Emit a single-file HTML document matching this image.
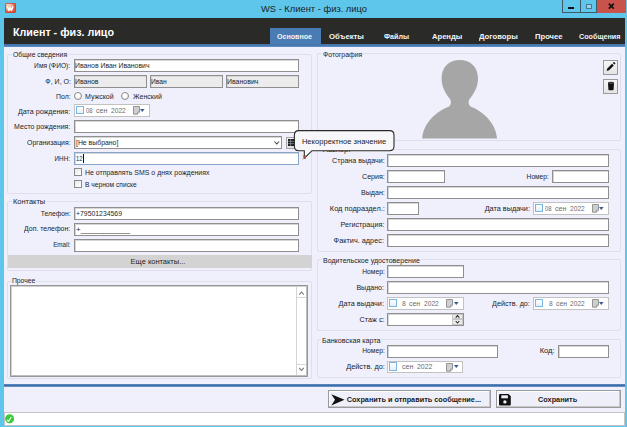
<!DOCTYPE html><html><head><meta charset="utf-8"><style>html,body{margin:0;padding:0;width:627px;height:427px;overflow:hidden;position:relative;font-family:"Liberation Sans",sans-serif}</style></head><body><div style="position:absolute;left:0px;top:0px;width:627px;height:427px;background:#5ec6ea"></div>
<div style="position:absolute;left:5.4px;top:3px;width:10.2px;height:10.3px;border-radius:2px;background:radial-gradient(circle at 30% 25%,#f3d9c4 0,#eab79a 30%,#e0563c 62%,#d9432f 100%);box-shadow:inset 0 0 0 0.8px #c2412e"></div>
<svg style="position:absolute;left:5.4px;top:3px" width="11" height="11"><path d="M2.4 3.4 L3.9 7.5 L5.2 4.6 L6.5 7.5 L8 3.4" fill="none" stroke="#fff" stroke-width="1.4" stroke-linejoin="round"/></svg>
<div id="t0" style="position:absolute;left:314.00px;top:4.39px;font-size:9.4px;line-height:10.500px;font-weight:400;color:#1d1d1d;white-space:nowrap;transform-origin:center center;transform:translateX(-50%) scaleX(0.9975);">WS - Клиент - физ. лицо</div>
<div style="position:absolute;left:580px;top:0px;width:17px;height:12.5px;background:#5ec6ea;border:1px solid #3d5a66;border-top:none;border-left:none;box-sizing:border-box"></div>
<div style="position:absolute;left:562px;top:0px;width:19px;height:12.5px;border:1px solid #3d5a66;border-top:none;box-sizing:border-box"></div>
<div style="position:absolute;left:597px;top:0px;width:28.5px;height:12.5px;background:#c9534b;box-sizing:border-box"></div>
<div style="position:absolute;left:568px;top:7px;width:6px;height:2px;background:#111"></div>
<div style="position:absolute;left:585.5px;top:3.5px;width:6.5px;height:5.0px;border:1px solid #4f7590;border-top-width:1.5px;background:#9ad4ec;box-sizing:border-box"></div>
<svg style="position:absolute;left:0;top:0" width="627" height="20"><path d="M608.8 3.6 L613.8 8.6 M613.8 3.6 L608.8 8.6" stroke="#111" stroke-width="1.6"/></svg>
<div style="position:absolute;left:4px;top:18.2px;width:621px;height:25.8px;background:#2a2a29"></div>
<div id="t1" style="position:absolute;left:13.00px;top:27.02px;font-size:10.7px;line-height:11.952px;font-weight:700;color:#ffffff;white-space:nowrap;transform-origin:left center;transform:scaleX(1.0034);">Клиент - физ. лицо</div>
<div style="position:absolute;left:270px;top:27.5px;width:51px;height:17.0px;background:#4a7cb4"></div>
<div id="t2" style="position:absolute;left:277.20px;top:32.69px;font-size:7.3px;line-height:8.154px;font-weight:700;color:#f4f4f4;white-space:nowrap;transform-origin:left center;transform:scaleX(0.9718);">Основное</div>
<div id="t3" style="position:absolute;left:328.50px;top:32.69px;font-size:7.3px;line-height:8.154px;font-weight:700;color:#f4f4f4;white-space:nowrap;transform-origin:left center;transform:scaleX(1.0631);">Объекты</div>
<div id="t4" style="position:absolute;left:384.10px;top:32.69px;font-size:7.3px;line-height:8.154px;font-weight:700;color:#f4f4f4;white-space:nowrap;transform-origin:left center;transform:scaleX(0.9750);">Файлы</div>
<div id="t5" style="position:absolute;left:432.00px;top:32.69px;font-size:7.3px;line-height:8.154px;font-weight:700;color:#f4f4f4;white-space:nowrap;transform-origin:left center;transform:scaleX(1.0426);">Аренды</div>
<div id="t6" style="position:absolute;left:478.80px;top:32.69px;font-size:7.3px;line-height:8.154px;font-weight:700;color:#f4f4f4;white-space:nowrap;transform-origin:left center;transform:scaleX(1.0576);">Договоры</div>
<div id="t7" style="position:absolute;left:534.70px;top:32.69px;font-size:7.3px;line-height:8.154px;font-weight:700;color:#f4f4f4;white-space:nowrap;transform-origin:left center;transform:scaleX(1.0439);">Прочее</div>
<div id="t8" style="position:absolute;left:579.00px;top:32.69px;font-size:7.3px;line-height:8.154px;font-weight:700;color:#f4f4f4;white-space:nowrap;transform-origin:left center;transform:scaleX(0.9842);">Сообщения</div>
<div style="position:absolute;left:4px;top:43.8px;width:621px;height:3.2px;background:linear-gradient(#4777b0 0%,#4576ae 55%,#6c9ccf 100%)"></div>
<div style="position:absolute;left:4px;top:47px;width:621px;height:336.5px;background:#f0f0fc"></div>
<div style="position:absolute;left:7px;top:53.5px;width:304.5px;height:140.0px;border:1px solid #dedeec;border-radius:2px;box-sizing:border-box"></div>
<div id="t9" style="position:absolute;left:12.80px;top:50.60px;font-size:7.4px;line-height:8.266px;font-weight:400;color:#222;white-space:nowrap;transform-origin:left center;transform:scaleX(0.9267);background:#f0f0fc;padding:0 1px;margin-left:-1px">Общие сведения</div>
<div style="position:absolute;left:7px;top:201px;width:304.5px;height:70px;border:1px solid #dedeec;border-radius:2px;box-sizing:border-box"></div>
<div id="t10" style="position:absolute;left:12.70px;top:198.10px;font-size:7.4px;line-height:8.266px;font-weight:400;color:#222;white-space:nowrap;transform-origin:left center;transform:scaleX(1.0082);background:#f0f0fc;padding:0 1px;margin-left:-1px">Контакты</div>
<div style="position:absolute;left:7px;top:280.5px;width:304.5px;height:98.3px;border:1px solid #dedeec;border-radius:2px;box-sizing:border-box"></div>
<div id="t11" style="position:absolute;left:12.40px;top:276.50px;font-size:7.4px;line-height:8.266px;font-weight:400;color:#222;white-space:nowrap;transform-origin:left center;transform:scaleX(0.9233);background:#f0f0fc;padding:0 1px;margin-left:-1px">Прочее</div>
<div style="position:absolute;left:317.3px;top:53px;width:304.2px;height:87.8px;border:1px solid #dedeec;border-radius:2px;box-sizing:border-box"></div>
<div id="t12" style="position:absolute;left:323.20px;top:50.50px;font-size:7.4px;line-height:8.266px;font-weight:400;color:#222;white-space:nowrap;transform-origin:left center;transform:scaleX(0.9357);background:#f0f0fc;padding:0 1px;margin-left:-1px">Фотография</div>
<div style="position:absolute;left:317.3px;top:149px;width:304.2px;height:102.6px;border:1px solid #dedeec;border-radius:2px;box-sizing:border-box"></div>
<div id="t13" style="position:absolute;left:322.70px;top:146.10px;font-size:7.4px;line-height:8.266px;font-weight:400;color:#222;white-space:nowrap;transform-origin:left center;background:#f0f0fc;padding:0 1px;margin-left:-1px">Паспорт</div>
<div style="position:absolute;left:317.3px;top:259.2px;width:304.2px;height:71.6px;border:1px solid #dedeec;border-radius:2px;box-sizing:border-box"></div>
<div id="t14" style="position:absolute;left:322.80px;top:256.90px;font-size:7.4px;line-height:8.266px;font-weight:400;color:#222;white-space:nowrap;transform-origin:left center;transform:scaleX(0.9554);background:#f0f0fc;padding:0 1px;margin-left:-1px">Водительское удостоверение</div>
<div style="position:absolute;left:317.3px;top:339.2px;width:304.2px;height:39.2px;border:1px solid #dedeec;border-radius:2px;box-sizing:border-box"></div>
<div id="t15" style="position:absolute;left:322.30px;top:336.80px;font-size:7.4px;line-height:8.266px;font-weight:400;color:#222;white-space:nowrap;transform-origin:left center;transform:scaleX(0.9696);background:#f0f0fc;padding:0 1px;margin-left:-1px">Банковская карта</div>
<div id="t16" style="position:absolute;right:556.50px;top:61.90px;font-size:7.4px;line-height:8.266px;font-weight:400;color:#222;white-space:nowrap;transform-origin:right center;transform:scaleX(0.8975);">Имя (ФИО):</div>
<div style="position:absolute;left:74px;top:59px;width:225px;height:13px;background:#fff;border:1px solid #8f8f8f;box-shadow:inset 1px 1px 0 #d6d6d6;box-sizing:border-box"></div>
<div id="t17" style="position:absolute;left:75.10px;top:61.90px;font-size:7.4px;line-height:8.266px;font-weight:400;color:#1e1e1e;white-space:nowrap;transform-origin:left center;transform:scaleX(0.9289);">Иванов Иван Иванович</div>
<div id="t18" style="position:absolute;right:556.50px;top:78.30px;font-size:7.4px;line-height:8.266px;font-weight:400;color:#222;white-space:nowrap;transform-origin:right center;transform:scaleX(0.9498);">Ф, И, О:</div>
<div style="position:absolute;left:74px;top:75px;width:73px;height:13px;background:#ececec;border:1px solid #8f8f8f;box-shadow:inset 1px 1px 0 #d6d6d6;box-sizing:border-box"></div>
<div style="position:absolute;left:150px;top:75px;width:73px;height:13px;background:#ececec;border:1px solid #8f8f8f;box-shadow:inset 1px 1px 0 #d6d6d6;box-sizing:border-box"></div>
<div style="position:absolute;left:226px;top:75px;width:73px;height:13px;background:#ececec;border:1px solid #8f8f8f;box-shadow:inset 1px 1px 0 #d6d6d6;box-sizing:border-box"></div>
<div id="t19" style="position:absolute;left:75.10px;top:78.30px;font-size:7.4px;line-height:8.266px;font-weight:400;color:#1e1e1e;white-space:nowrap;transform-origin:left center;transform:scaleX(0.9255);">Иванов</div>
<div id="t20" style="position:absolute;left:151.10px;top:78.30px;font-size:7.4px;line-height:8.266px;font-weight:400;color:#1e1e1e;white-space:nowrap;transform-origin:left center;transform:scaleX(0.9102);">Иван</div>
<div id="t21" style="position:absolute;left:227.00px;top:78.30px;font-size:7.4px;line-height:8.266px;font-weight:400;color:#1e1e1e;white-space:nowrap;transform-origin:left center;transform:scaleX(0.9408);">Иванович</div>
<div id="t22" style="position:absolute;right:556.50px;top:92.80px;font-size:7.4px;line-height:8.266px;font-weight:400;color:#222;white-space:nowrap;transform-origin:right center;transform:scaleX(0.9335);">Пол:</div>
<div style="position:absolute;left:73.6px;top:91.6px;width:8.0px;height:8.0px;border:1px solid #8a8a8a;border-radius:50%;background:radial-gradient(circle at 40% 35%,#fff 30%,#e4e4e4);box-sizing:border-box"></div>
<div id="t23" style="position:absolute;left:85.20px;top:92.80px;font-size:7.4px;line-height:8.266px;font-weight:400;color:#1e1e1e;white-space:nowrap;transform-origin:left center;transform:scaleX(0.9497);">Мужской</div>
<div style="position:absolute;left:120.9px;top:91.6px;width:8.0px;height:8.0px;border:1px solid #8a8a8a;border-radius:50%;background:radial-gradient(circle at 40% 35%,#fff 30%,#e4e4e4);box-sizing:border-box"></div>
<div id="t24" style="position:absolute;left:132.60px;top:92.80px;font-size:7.4px;line-height:8.266px;font-weight:400;color:#1e1e1e;white-space:nowrap;transform-origin:left center;transform:scaleX(0.9593);">Женский</div>
<div id="t25" style="position:absolute;right:556.50px;top:107.50px;font-size:7.4px;line-height:8.266px;font-weight:400;color:#222;white-space:nowrap;transform-origin:right center;transform:scaleX(0.9649);">Дата рождения:</div>
<div style="position:absolute;left:74px;top:104px;width:76px;height:13px;background:#fff;border:1px solid #c2c2c2;box-sizing:border-box"></div>
<div style="position:absolute;left:75.8px;top:105.6px;width:8.2px;height:8.6px;border:1px solid #78b6e4;background:linear-gradient(#fff,#e6eef6);box-sizing:border-box"></div>
<div id="t26" style="position:absolute;left:85.80px;top:106.70px;font-size:7.4px;line-height:8.266px;font-weight:400;color:#6c6c6c;white-space:nowrap;transform-origin:left center;transform:scaleX(0.8015);">08</div>
<div id="t27" style="position:absolute;left:95.60px;top:106.70px;font-size:7.4px;line-height:8.266px;font-weight:400;color:#6c6c6c;white-space:nowrap;transform-origin:left center;transform:scaleX(0.9671);">сен</div>
<div id="t28" style="position:absolute;left:110.90px;top:106.70px;font-size:7.4px;line-height:8.266px;font-weight:400;color:#6c6c6c;white-space:nowrap;transform-origin:left center;transform:scaleX(0.8995);">2022</div>
<svg style="position:absolute;left:132.6px;top:106.4px" width="8" height="9"><path d="M0.5 0.5 H6.5 V6 L4.5 8.2 H0.5 Z" fill="#cfcfcf" stroke="#8a8a8a" stroke-width="0.9"/><path d="M6.5 6 H4.5 V8.2" fill="#eee" stroke="#8a8a8a" stroke-width="0.7"/></svg>
<svg style="position:absolute;left:140.4px;top:108.6px" width="5" height="4"><path d="M0 0 L4.6 0 L2.3 3 Z" fill="#3a5c92"/></svg>
<div id="t29" style="position:absolute;right:556.50px;top:123.00px;font-size:7.4px;line-height:8.266px;font-weight:400;color:#222;white-space:nowrap;transform-origin:right center;transform:scaleX(0.9480);">Место рождения:</div>
<div style="position:absolute;left:74px;top:120px;width:225px;height:13px;background:#fff;border:1px solid #8f8f8f;box-shadow:inset 1px 1px 0 #d6d6d6;box-sizing:border-box"></div>
<div id="t30" style="position:absolute;right:556.50px;top:138.60px;font-size:7.4px;line-height:8.266px;font-weight:400;color:#222;white-space:nowrap;transform-origin:right center;transform:scaleX(0.9348);">Организация:</div>
<div style="position:absolute;left:74px;top:136px;width:208px;height:13px;background:#fff;border:1px solid #8f8f8f;box-shadow:inset 1px 1px 0 #d6d6d6;box-sizing:border-box"></div>
<div id="t31" style="position:absolute;left:75.50px;top:139.00px;font-size:7.4px;line-height:8.266px;font-weight:400;color:#1e1e1e;white-space:nowrap;transform-origin:left center;transform:scaleX(0.9297);">[Не выбрано]</div>
<svg style="position:absolute;left:273.8px;top:141px" width="6" height="4"><path d="M0.5 0.5 L2.8 3 L5.1 0.5" fill="none" stroke="#444" stroke-width="1.1"/></svg>
<div style="position:absolute;left:286px;top:136.5px;width:11px;height:12.0px;background:linear-gradient(#f2f2f2,#e2e2e2);border:1px solid #a4a4a4;box-sizing:border-box"></div>
<svg style="position:absolute;left:288px;top:139px" width="8" height="7"><rect x="0" y="0" width="8" height="7" fill="#1a1a1a"/><path d="M0 2.35 H8 M0 4.65 H8 M2.6 0 V7" stroke="#9aa0a8" stroke-width="0.7"/></svg>
<div id="t32" style="position:absolute;right:556.50px;top:154.70px;font-size:7.4px;line-height:8.266px;font-weight:400;color:#222;white-space:nowrap;transform-origin:right center;transform:scaleX(0.8589);">ИНН:</div>
<div style="position:absolute;left:74px;top:152px;width:225px;height:13px;background:#fff;border:1px solid #88a6cc;box-shadow:inset 1px 1px 0 #d6d6d6;box-sizing:border-box"></div>
<div id="t33" style="position:absolute;left:76.30px;top:155.00px;font-size:7.4px;line-height:8.266px;font-weight:400;color:#1e1e1e;white-space:nowrap;transform-origin:left center;transform:scaleX(0.7772);">12</div>
<div style="position:absolute;left:83.2px;top:154.2px;width:0.8px;height:8.6px;background:#111"></div>
<div style="position:absolute;left:73.9px;top:168.3px;width:8.1px;height:8.2px;border:1px solid #8a8a8a;background:linear-gradient(135deg,#e8e8e8,#fff);box-sizing:border-box"></div>
<div id="t34" style="position:absolute;left:85.30px;top:168.70px;font-size:7.4px;line-height:8.266px;font-weight:400;color:#1e1e1e;white-space:nowrap;transform-origin:left center;transform:scaleX(0.9416);">Не отправлять SMS о днях рождениях</div>
<div style="position:absolute;left:73.9px;top:180.2px;width:8.1px;height:8.1px;border:1px solid #8a8a8a;background:linear-gradient(135deg,#e8e8e8,#fff);box-sizing:border-box"></div>
<div id="t35" style="position:absolute;left:85.30px;top:180.70px;font-size:7.4px;line-height:8.266px;font-weight:400;color:#1e1e1e;white-space:nowrap;transform-origin:left center;transform:scaleX(0.9018);">В черном списке</div>
<div id="t36" style="position:absolute;right:556.50px;top:209.60px;font-size:7.4px;line-height:8.266px;font-weight:400;color:#222;white-space:nowrap;transform-origin:right center;transform:scaleX(0.9138);">Телефон:</div>
<div style="position:absolute;left:74px;top:207px;width:225px;height:13px;background:#fff;border:1px solid #8f8f8f;box-shadow:inset 1px 1px 0 #d6d6d6;box-sizing:border-box"></div>
<div id="t37" style="position:absolute;left:75.80px;top:210.00px;font-size:7.4px;line-height:8.266px;font-weight:400;color:#1e1e1e;white-space:nowrap;transform-origin:left center;transform:scaleX(0.9287);">+79501234569</div>
<div id="t38" style="position:absolute;right:556.50px;top:225.00px;font-size:7.4px;line-height:8.266px;font-weight:400;color:#222;white-space:nowrap;transform-origin:right center;transform:scaleX(0.9384);">Доп. телефон:</div>
<div style="position:absolute;left:74px;top:223px;width:225px;height:13px;background:#fff;border:1px solid #8f8f8f;box-shadow:inset 1px 1px 0 #d6d6d6;box-sizing:border-box"></div>
<div id="t39" style="position:absolute;left:75.80px;top:225.80px;font-size:7.4px;line-height:8.266px;font-weight:400;color:#1e1e1e;white-space:nowrap;transform-origin:left center;transform:scaleX(1.0902);">+___________</div>
<div id="t40" style="position:absolute;right:556.50px;top:240.80px;font-size:7.4px;line-height:8.266px;font-weight:400;color:#222;white-space:nowrap;transform-origin:right center;transform:scaleX(0.8468);">Email:</div>
<div style="position:absolute;left:74px;top:239px;width:225px;height:13px;background:#fff;border:1px solid #8f8f8f;box-shadow:inset 1px 1px 0 #d6d6d6;box-sizing:border-box"></div>
<div style="position:absolute;left:8px;top:255px;width:303.5px;height:13.3px;background:#d3d3d3"></div>
<div id="t41" style="position:absolute;left:157.90px;top:258.20px;font-size:7.4px;line-height:8.266px;font-weight:400;color:#1e1e1e;white-space:nowrap;transform-origin:center center;transform:translateX(-50%) scaleX(1.0113);">Еще контакты...</div>
<div style="position:absolute;left:10px;top:285.3px;width:298.2px;height:91.7px;background:#fff;border:1px solid #979797;box-shadow:inset 1px 1px 0 #cfcfcf, inset -1px -1px 0 #bdbdbd;box-sizing:border-box"></div>
<div style="position:absolute;left:296.4px;top:287.3px;width:9.8px;height:87.7px;background:#fff;border-left:1px solid #d4d4d4;box-sizing:border-box"></div>
<div style="position:absolute;left:296.4px;top:297px;width:9.8px;height:1px;background:#d8d8d8"></div>
<div style="position:absolute;left:296.4px;top:364.2px;width:9.8px;height:1.0px;background:#d8d8d8"></div>
<svg style="position:absolute;left:0;top:0" width="627" height="427"><path d="M299.2 294.6 L301.5 292 L303.8 294.6 M299.2 367.8 L301.5 370.4 L303.8 367.8" fill="none" stroke="#7a7a7a" stroke-width="1.1"/></svg>
<svg style="position:absolute;left:0;top:0" width="627" height="427"><g fill="#a6a6a6"><path d="M459.8 59.9 C470.5 59.9 478 67 478 78.2 C478 86 475 92 470 98.5 C468.3 100.5 468 104 470.5 106.5 C482.5 110.8 496 123 497.1 138.5 L422.2 138.5 C423.3 123 436.8 110.8 449.1 106.5 C451.6 104 451.3 100.5 449.6 98.5 C444.6 92 441.6 86 441.6 78.2 C441.6 67 449 59.9 459.8 59.9 Z"/></g></svg>
<div style="position:absolute;left:603.2px;top:60.2px;width:14.8px;height:14.4px;background:linear-gradient(#f6f6f6,#e4e4e4);border:1px solid #9a9a9a;box-sizing:border-box"></div>
<svg style="position:absolute;left:605px;top:62px" width="11" height="11"><path d="M1.6 8.9 L2.3 6.4 L7 1.7 L8.8 3.5 L4.1 8.2 Z" fill="#111"/><path d="M7.8 0.9 L8.5 0.2 Q9 0 9.4 0.3 L10.2 1.1 Q10.5 1.5 10.2 1.9 L9.5 2.6 Z" fill="#111"/></svg>
<div style="position:absolute;left:603.2px;top:79.1px;width:14.8px;height:14.5px;background:linear-gradient(#f6f6f6,#e4e4e4);border:1px solid #9a9a9a;box-sizing:border-box"></div>
<svg style="position:absolute;left:605px;top:81px" width="11" height="11"><path d="M3 2 Q3 0.8 6 0.8 Q9 0.8 9 2 L8.6 8.6 Q8.5 9.3 7.8 9.3 L4.2 9.3 Q3.5 9.3 3.4 8.6 Z" fill="#111"/><ellipse cx="6" cy="2" rx="2.3" ry="0.55" fill="#777"/></svg>
<div id="t42" style="position:absolute;right:242.60px;top:156.80px;font-size:7.4px;line-height:8.266px;font-weight:400;color:#222;white-space:nowrap;transform-origin:right center;transform:scaleX(0.9631);">Страна выдачи:</div>
<div style="position:absolute;left:387px;top:154px;width:222px;height:13px;background:#fff;border:1px solid #8f8f8f;box-shadow:inset 1px 1px 0 #d6d6d6;box-sizing:border-box"></div>
<div id="t43" style="position:absolute;right:242.60px;top:172.80px;font-size:7.4px;line-height:8.266px;font-weight:400;color:#222;white-space:nowrap;transform-origin:right center;transform:scaleX(0.9558);">Серия:</div>
<div style="position:absolute;left:387px;top:170px;width:58px;height:13px;background:#fff;border:1px solid #8f8f8f;box-shadow:inset 1px 1px 0 #d6d6d6;box-sizing:border-box"></div>
<div id="t44" style="position:absolute;right:78.00px;top:172.80px;font-size:7.4px;line-height:8.266px;font-weight:400;color:#222;white-space:nowrap;transform-origin:right center;transform:scaleX(0.8947);">Номер:</div>
<div style="position:absolute;left:552px;top:170px;width:57px;height:13px;background:#fff;border:1px solid #8f8f8f;box-shadow:inset 1px 1px 0 #d6d6d6;box-sizing:border-box"></div>
<div id="t45" style="position:absolute;right:242.60px;top:188.80px;font-size:7.4px;line-height:8.266px;font-weight:400;color:#222;white-space:nowrap;transform-origin:right center;transform:scaleX(0.9632);">Выдан:</div>
<div style="position:absolute;left:387px;top:186px;width:222px;height:13px;background:#fff;border:1px solid #8f8f8f;box-shadow:inset 1px 1px 0 #d6d6d6;box-sizing:border-box"></div>
<div id="t46" style="position:absolute;right:242.60px;top:204.80px;font-size:7.4px;line-height:8.266px;font-weight:400;color:#222;white-space:nowrap;transform-origin:right center;transform:scaleX(1.0028);">Код подраздел.:</div>
<div style="position:absolute;left:387px;top:202px;width:32px;height:13px;background:#fff;border:1px solid #8f8f8f;box-shadow:inset 1px 1px 0 #d6d6d6;box-sizing:border-box"></div>
<div id="t47" style="position:absolute;right:97.20px;top:204.80px;font-size:7.4px;line-height:8.266px;font-weight:400;color:#222;white-space:nowrap;transform-origin:right center;transform:scaleX(0.9858);">Дата выдачи:</div>
<div style="position:absolute;left:533.3px;top:202px;width:75.7px;height:12.6px;background:#fff;border:1px solid #c2c2c2;box-sizing:border-box"></div>
<div style="position:absolute;left:535.0999999999999px;top:203.6px;width:8.2px;height:8.6px;border:1px solid #78b6e4;background:linear-gradient(#fff,#e6eef6);box-sizing:border-box"></div>
<div id="t48" style="position:absolute;left:545.10px;top:204.70px;font-size:7.4px;line-height:8.266px;font-weight:400;color:#6c6c6c;white-space:nowrap;transform-origin:left center;transform:scaleX(0.8015);">08</div>
<div id="t49" style="position:absolute;left:554.90px;top:204.70px;font-size:7.4px;line-height:8.266px;font-weight:400;color:#6c6c6c;white-space:nowrap;transform-origin:left center;transform:scaleX(0.9671);">сен</div>
<div id="t50" style="position:absolute;left:570.20px;top:204.70px;font-size:7.4px;line-height:8.266px;font-weight:400;color:#6c6c6c;white-space:nowrap;transform-origin:left center;transform:scaleX(0.8995);">2022</div>
<svg style="position:absolute;left:591.6px;top:204.4px" width="8" height="9"><path d="M0.5 0.5 H6.5 V6 L4.5 8.2 H0.5 Z" fill="#cfcfcf" stroke="#8a8a8a" stroke-width="0.9"/><path d="M6.5 6 H4.5 V8.2" fill="#eee" stroke="#8a8a8a" stroke-width="0.7"/></svg>
<svg style="position:absolute;left:599.4px;top:206.6px" width="5" height="4"><path d="M0 0 L4.6 0 L2.3 3 Z" fill="#3a5c92"/></svg>
<div id="t51" style="position:absolute;right:242.60px;top:220.80px;font-size:7.4px;line-height:8.266px;font-weight:400;color:#222;white-space:nowrap;transform-origin:right center;transform:scaleX(0.9676);">Регистрация:</div>
<div style="position:absolute;left:387px;top:218px;width:222px;height:13px;background:#fff;border:1px solid #8f8f8f;box-shadow:inset 1px 1px 0 #d6d6d6;box-sizing:border-box"></div>
<div id="t52" style="position:absolute;right:242.60px;top:236.80px;font-size:7.4px;line-height:8.266px;font-weight:400;color:#222;white-space:nowrap;transform-origin:right center;transform:scaleX(0.9878);">Фактич. адрес:</div>
<div style="position:absolute;left:387px;top:234px;width:222px;height:13px;background:#fff;border:1px solid #8f8f8f;box-shadow:inset 1px 1px 0 #d6d6d6;box-sizing:border-box"></div>
<div id="t53" style="position:absolute;right:242.60px;top:267.80px;font-size:7.4px;line-height:8.266px;font-weight:400;color:#222;white-space:nowrap;transform-origin:right center;transform:scaleX(0.9108);">Номер:</div>
<div style="position:absolute;left:387px;top:265px;width:76.5px;height:13px;background:#fff;border:1px solid #8f8f8f;box-shadow:inset 1px 1px 0 #d6d6d6;box-sizing:border-box"></div>
<div id="t54" style="position:absolute;right:242.60px;top:283.80px;font-size:7.4px;line-height:8.266px;font-weight:400;color:#222;white-space:nowrap;transform-origin:right center;transform:scaleX(0.9508);">Выдано:</div>
<div style="position:absolute;left:387px;top:281px;width:222px;height:13px;background:#fff;border:1px solid #8f8f8f;box-shadow:inset 1px 1px 0 #d6d6d6;box-sizing:border-box"></div>
<div id="t55" style="position:absolute;right:242.60px;top:299.80px;font-size:7.4px;line-height:8.266px;font-weight:400;color:#222;white-space:nowrap;transform-origin:right center;transform:scaleX(0.9880);">Дата выдачи:</div>
<div style="position:absolute;left:387px;top:297px;width:76.5px;height:12.6px;background:#fff;border:1px solid #c2c2c2;box-sizing:border-box"></div>
<div style="position:absolute;left:388.8px;top:298.6px;width:8.2px;height:8.6px;border:1px solid #78b6e4;background:linear-gradient(#fff,#e6eef6);box-sizing:border-box"></div>
<div id="t56" style="position:absolute;left:402.40px;top:299.70px;font-size:7.4px;line-height:8.266px;font-weight:400;color:#6c6c6c;white-space:nowrap;transform-origin:left center;transform:scaleX(0.8970);">8</div>
<div id="t57" style="position:absolute;left:409.30px;top:299.70px;font-size:7.4px;line-height:8.266px;font-weight:400;color:#6c6c6c;white-space:nowrap;transform-origin:left center;transform:scaleX(0.9419);">сен</div>
<div id="t58" style="position:absolute;left:424.10px;top:299.70px;font-size:7.4px;line-height:8.266px;font-weight:400;color:#6c6c6c;white-space:nowrap;transform-origin:left center;transform:scaleX(0.8995);">2022</div>
<svg style="position:absolute;left:446.1px;top:299.4px" width="8" height="9"><path d="M0.5 0.5 H6.5 V6 L4.5 8.2 H0.5 Z" fill="#cfcfcf" stroke="#8a8a8a" stroke-width="0.9"/><path d="M6.5 6 H4.5 V8.2" fill="#eee" stroke="#8a8a8a" stroke-width="0.7"/></svg>
<svg style="position:absolute;left:453.9px;top:301.6px" width="5" height="4"><path d="M0 0 L4.6 0 L2.3 3 Z" fill="#3a5c92"/></svg>
<div id="t59" style="position:absolute;right:97.20px;top:299.80px;font-size:7.4px;line-height:8.266px;font-weight:400;color:#222;white-space:nowrap;transform-origin:right center;transform:scaleX(0.9731);">Действ. до:</div>
<div style="position:absolute;left:533.3px;top:297px;width:75.7px;height:12.6px;background:#fff;border:1px solid #c2c2c2;box-sizing:border-box"></div>
<div style="position:absolute;left:535.0999999999999px;top:298.6px;width:8.2px;height:8.6px;border:1px solid #78b6e4;background:linear-gradient(#fff,#e6eef6);box-sizing:border-box"></div>
<div id="t60" style="position:absolute;left:548.70px;top:299.70px;font-size:7.4px;line-height:8.266px;font-weight:400;color:#6c6c6c;white-space:nowrap;transform-origin:left center;transform:scaleX(0.8970);">8</div>
<div id="t61" style="position:absolute;left:555.60px;top:299.70px;font-size:7.4px;line-height:8.266px;font-weight:400;color:#6c6c6c;white-space:nowrap;transform-origin:left center;transform:scaleX(0.9419);">сен</div>
<div id="t62" style="position:absolute;left:570.40px;top:299.70px;font-size:7.4px;line-height:8.266px;font-weight:400;color:#6c6c6c;white-space:nowrap;transform-origin:left center;transform:scaleX(0.8995);">2022</div>
<svg style="position:absolute;left:591.6px;top:299.4px" width="8" height="9"><path d="M0.5 0.5 H6.5 V6 L4.5 8.2 H0.5 Z" fill="#cfcfcf" stroke="#8a8a8a" stroke-width="0.9"/><path d="M6.5 6 H4.5 V8.2" fill="#eee" stroke="#8a8a8a" stroke-width="0.7"/></svg>
<svg style="position:absolute;left:599.4px;top:301.6px" width="5" height="4"><path d="M0 0 L4.6 0 L2.3 3 Z" fill="#3a5c92"/></svg>
<div id="t63" style="position:absolute;right:242.60px;top:315.80px;font-size:7.4px;line-height:8.266px;font-weight:400;color:#222;white-space:nowrap;transform-origin:right center;transform:scaleX(0.9765);">Стаж с:</div>
<div style="position:absolute;left:387px;top:313px;width:76.5px;height:13px;background:#fff;border:1px solid #8f8f8f;box-shadow:inset 1px 1px 0 #d6d6d6;box-sizing:border-box"></div>
<div style="position:absolute;left:452px;top:314px;width:10.5px;height:5.4px;background:#ececec;border:1px solid #c6c6c6;box-sizing:border-box"></div>
<div style="position:absolute;left:452px;top:319.4px;width:10.5px;height:5.6px;background:#ececec;border:1px solid #c6c6c6;box-sizing:border-box"></div>
<svg style="position:absolute;left:0;top:0" width="627" height="427"><path d="M455.7 317.6 L457.5 315.6 L459.3 317.6 M455.7 321 L457.5 323 L459.3 321" fill="none" stroke="#2a2a2a" stroke-width="1.1"/></svg>
<div id="t64" style="position:absolute;right:242.60px;top:347.30px;font-size:7.4px;line-height:8.266px;font-weight:400;color:#222;white-space:nowrap;transform-origin:right center;transform:scaleX(0.9108);">Номер:</div>
<div style="position:absolute;left:387px;top:345px;width:111px;height:12.5px;background:#fff;border:1px solid #8f8f8f;box-shadow:inset 1px 1px 0 #d6d6d6;box-sizing:border-box"></div>
<div id="t65" style="position:absolute;right:72.00px;top:347.30px;font-size:7.4px;line-height:8.266px;font-weight:400;color:#222;white-space:nowrap;transform-origin:right center;transform:scaleX(1.0256);">Код:</div>
<div style="position:absolute;left:557.7px;top:345px;width:51.6px;height:12.5px;background:#fff;border:1px solid #8f8f8f;box-shadow:inset 1px 1px 0 #d6d6d6;box-sizing:border-box"></div>
<div id="t66" style="position:absolute;right:242.60px;top:363.30px;font-size:7.4px;line-height:8.266px;font-weight:400;color:#222;white-space:nowrap;transform-origin:right center;transform:scaleX(0.9963);">Действ. до:</div>
<div style="position:absolute;left:387px;top:360.5px;width:76.3px;height:12.5px;background:#fff;border:1px solid #c2c2c2;box-sizing:border-box"></div>
<div style="position:absolute;left:388.8px;top:362.1px;width:8.2px;height:8.6px;border:1px solid #78b6e4;background:linear-gradient(#fff,#e6eef6);box-sizing:border-box"></div>
<div id="t67" style="position:absolute;left:402.00px;top:363.20px;font-size:7.4px;line-height:8.266px;font-weight:400;color:#6c6c6c;white-space:nowrap;transform-origin:left center;transform:scaleX(0.9671);">сен</div>
<div id="t68" style="position:absolute;left:416.80px;top:363.20px;font-size:7.4px;line-height:8.266px;font-weight:400;color:#6c6c6c;white-space:nowrap;transform-origin:left center;transform:scaleX(0.9360);">2022</div>
<svg style="position:absolute;left:445.90000000000003px;top:362.9px" width="8" height="9"><path d="M0.5 0.5 H6.5 V6 L4.5 8.2 H0.5 Z" fill="#cfcfcf" stroke="#8a8a8a" stroke-width="0.9"/><path d="M6.5 6 H4.5 V8.2" fill="#eee" stroke="#8a8a8a" stroke-width="0.7"/></svg>
<svg style="position:absolute;left:453.7px;top:365.1px" width="5" height="4"><path d="M0 0 L4.6 0 L2.3 3 Z" fill="#3a5c92"/></svg>
<div style="position:absolute;left:4px;top:383.5px;width:621px;height:3.7px;background:linear-gradient(#6894c8 0%,#3e6da7 35%,#4172ab 70%,#8ab0da 100%)"></div>
<div style="position:absolute;left:4px;top:387.2px;width:621px;height:25.3px;background:#f0f0fc"></div>
<div style="position:absolute;left:328px;top:390px;width:163px;height:18px;background:#efeffa;border:1px solid #9a9a9a;box-shadow:inset -1px -1px 0 #c8c8c8, inset 1px 1px 0 #fff;box-sizing:border-box"></div>
<svg style="position:absolute;left:330.5px;top:393.5px" width="14" height="12"><path d="M0.3 0.3 L13.5 5.8 L0.3 11.4 L4 5.8 Z" fill="#111"/></svg>
<div id="t69" style="position:absolute;left:346.80px;top:396.39px;font-size:7.3px;line-height:8.154px;font-weight:700;color:#1a1a1a;white-space:nowrap;transform-origin:left center;">Сохранить и отправить сообщение...</div>
<div style="position:absolute;left:495.8px;top:390px;width:125.2px;height:18px;background:#efeffa;border:1px solid #9a9a9a;box-shadow:inset -1px -1px 0 #c8c8c8, inset 1px 1px 0 #fff;box-sizing:border-box"></div>
<svg style="position:absolute;left:499.4px;top:394.2px" width="12" height="12"><path d="M0 1.2 Q0 0 1.2 0 L9.5 0 L11.8 2.3 L11.8 10.6 Q11.8 11.6 10.8 11.6 L1.2 11.6 Q0 11.6 0 10.6 Z" fill="#111"/><rect x="2.3" y="1.3" width="6.6" height="3" fill="#efeffa"/><circle cx="5.9" cy="7.9" r="1.7" fill="#efeffa"/></svg>
<div id="t70" style="position:absolute;left:538.00px;top:396.39px;font-size:7.3px;line-height:8.154px;font-weight:700;color:#1a1a1a;white-space:nowrap;transform-origin:left center;transform:scaleX(1.0031);">Сохранить</div>
<div style="position:absolute;left:4px;top:412px;width:621px;height:14px;background:#fff;border:1px solid #c4c4c4;box-sizing:border-box"></div>
<svg style="position:absolute;left:5.3px;top:414.2px" width="10" height="10"><circle cx="4.6" cy="4.7" r="4.5" fill="#3bc93b"/><path d="M1.9 6 L3.6 7.2 L6.3 3" fill="none" stroke="#fff" stroke-width="1.2"/></svg>
<svg style="position:absolute;left:0;top:0" width="627" height="427"><path d="M298.8 130.6 L389.6 130.6 Q394 130.6 394 135 L394 146.3 Q394 150.7 389.6 150.7 L312 150.7 L304.3 158.2 L304.3 150.7 L298.8 150.7 Q294.4 150.7 294.4 146.3 L294.4 135 Q294.4 130.6 298.8 130.6 Z" fill="#f7f7f9" stroke="#2a2a2a" stroke-width="1.1"/><path d="M302.6 155.6 L306 158.8 M306 155.6 L302.6 158.8" stroke="#e05a30" stroke-width="1"/></svg>
<div id="t71" style="position:absolute;left:301.90px;top:137.72px;font-size:7.6px;line-height:8.489px;font-weight:400;color:#222;white-space:nowrap;transform-origin:left center;">Некорректное значение</div></body></html>
